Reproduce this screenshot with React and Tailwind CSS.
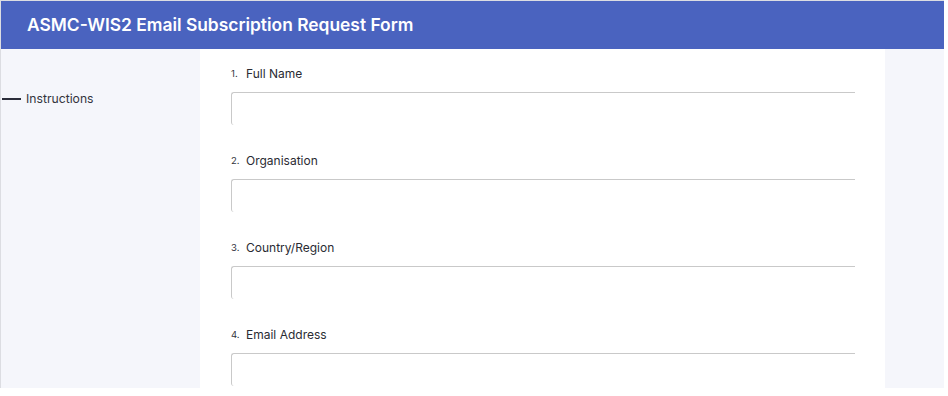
import React from "react";

const fields = ["Full Name", "Organisation", "Country/Region", "Email Address"];

export default function App() {
  return (
    <div className="w-[948px] h-[396px] bg-white overflow-hidden" style={{ fontFamily: "Inter, 'Noto Sans', sans-serif" }}>
      <div className="w-[944px] h-[388px] border-l border-t border-[#dcdde2] flex flex-col">
        <div className="h-[48px] shrink-0 w-[943px] bg-[#4a63bf] flex items-center pl-[26px] text-white text-[17.4px] font-semibold">
          ASMC-WIS2 Email Subscription Request Form
        </div>
        <div className="flex h-[339px] w-[943px] overflow-hidden">
          <div className="w-[199px] shrink-0 bg-[#f5f6fb] pt-[42px]">
            <div className="flex items-center h-[16px]">
              <div className="w-[19px] h-[2px] bg-[#2b2d3a] ml-[1px]" />
              <span className="ml-[5px] text-[12.2px] text-[#33343d]">Instructions</span>
            </div>
          </div>
          <div className="w-[685px] shrink-0 bg-white pl-[31px] pt-[16px] flex flex-col">
            {fields.map((f, i) => (
              <div key={f} className="flex flex-col mb-[27px] shrink-0">
                <div className="h-[18px] flex items-center mb-[9px]">
                  <span className="text-[9.5px] text-[#33343d] w-[15px]">{i + 1}.</span>
                  <span className="text-[12px] text-[#2a2b33]">{f}</span>
                </div>
                <div className="w-[624px] h-[33px] border-l border-t border-[#c9c9c9] rounded-l-[3px]" />
              </div>
            ))}
          </div>
          <div className="flex-1 bg-[#f5f6fb]" />
        </div>
      </div>
    </div>
  );
}
